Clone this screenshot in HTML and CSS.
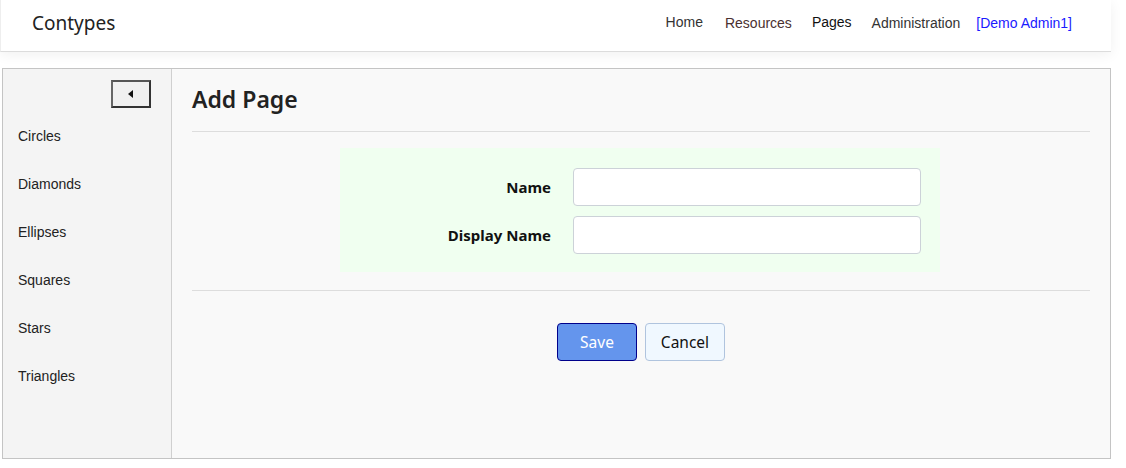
FILE: index.html
```html
<!DOCTYPE html>
<html>
<head>
<meta charset="utf-8">
<link rel="stylesheet" href="styles.css">
</head>
<body>
<div class="page">
  <header class="navbar">
    <a class="brand">Contypes</a>
    <nav class="nav">
      <a class="nav-home">Home</a>
      <a class="nav-res">Resources</a>
      <a class="nav-pages">Pages</a>
      <a class="nav-admin">Administration</a>
      <a class="nav-user">[Demo Admin1]</a>
    </nav>
  </header>
  <main class="frame">
    <aside class="sidebar">
      <div class="toggle-row">
        <button class="toggle"><svg width="6" height="8" viewBox="0 0 6 8"><path d="M5 0 L0 4 L5 8 Z" fill="#111"/></svg></button>
      </div>
      <ul class="side-list">
        <li>Circles</li>
        <li>Diamonds</li>
        <li>Ellipses</li>
        <li>Squares</li>
        <li>Stars</li>
        <li>Triangles</li>
      </ul>
    </aside>
    <section class="content">
      <h1 class="title">Add Page</h1>
      <div class="rule"></div>
      <div class="form-wrap">
        <div class="form-box">
          <div class="form-row">
            <label class="lbl">Name</label>
            <input class="inp" type="text">
          </div>
          <div class="form-row">
            <label class="lbl">Display Name</label>
            <input class="inp" type="text">
          </div>
        </div>
      </div>
      <div class="rule rule2"></div>
      <div class="actions">
        <button class="btn btn-save">Save</button>
        <button class="btn btn-cancel">Cancel</button>
      </div>
    </section>
  </main>
</div>
</body>
</html>
```
FILE: styles.css
```css
html, body {
  margin: 0;
  padding: 0;
  background: #fff;
}
.page {
  width: 1111px;
}
.navbar {
  height: 51px;
  background: #fff;
  border-bottom: 1px solid #dcdcdc;
  border-left: 1px solid #eee;
  box-shadow: 0 3px 12px rgba(0,0,0,0.06);
  display: flex;
  align-items: center;
  justify-content: space-between;
  padding: 0 39px 0 31px;
  margin-bottom: 16px;
}
.brand {
  font-family: "Noto Sans", "Open Sans", sans-serif;
  font-size: 19px;
  color: #222;
  margin-top: -5px;
}
.nav {
  display: flex;
  gap: 22px;
  font-family: "Liberation Sans", Arial, sans-serif;
  font-size: 14px;
  margin-top: -6px;
}
.nav a { color: #333; }
.nav-home { color: #333; position: relative; top: -1px; }
.nav .nav-res { color: #4a3030; margin-right: -2px; }
.nav .nav-pages { color: #111; position: relative; top: -1px; }
.nav .nav-admin { color: #333; margin-left: -2px; }
.nav .nav-user { color: #1a1aff; margin-left: -6px; }

.frame {
  margin-left: 2px;
  height: 389px;
  border: 1px solid #c4c4c4;
  display: flex;
  background: #f9f9f9;
}
.sidebar {
  width: 168px;
  background: #f4f4f4;
  border-right: 1px solid #d0d0d0;
}
.toggle-row {
  display: flex;
  justify-content: flex-end;
  padding: 11px 20px 0 0;
}
.toggle {
  width: 40px;
  height: 28px;
  border: 2px solid #333;
  border-top-color: #555;
  border-left-color: #666;
  background: #f0f0f0;
  padding: 0;
  display: flex;
  align-items: center;
  justify-content: center;
}
.side-list {
  list-style: none;
  margin: 0;
  padding: 0 0 0 15px;
  font-family: "Liberation Sans", Arial, sans-serif;
  font-size: 14px;
  color: #222;
}
.side-list li {
  height: 48px;
  line-height: 48px;
}
.side-list li:first-child { margin-top: 4px; }
.content {
  flex: 1;
  padding: 0 20px;
}
.title {
  margin: 0;
  padding-top: 15px;
  height: 47px;
  font-family: "Noto Sans", "Open Sans", sans-serif;
  font-weight: 600;
  font-size: 23px;
  color: #222;
  line-height: 30px;
}
.rule {
  height: 1px;
  background: #ddd;
}
.form-wrap {
  display: flex;
  justify-content: center;
  padding: 16px 2px 18px 0;
}
.form-box {
  width: 600px;
  background: #f0fff0;
  padding: 20px 19px 18px 0;
  box-sizing: border-box;
  display: flex;
  flex-direction: column;
  gap: 10px;
}
.form-row {
  display: flex;
  align-items: center;
  gap: 22px;
}
.lbl {
  width: 211px;
  text-align: right;
  font-family: "Noto Sans", "Open Sans", sans-serif;
  font-weight: 700;
  font-size: 15px;
  color: #111;
}
.inp {
  width: 348px;
  height: 38px;
  box-sizing: border-box;
  border: 1px solid #ccd2d8;
  border-radius: 4px;
  background: #fff;
}
.actions {
  display: flex;
  justify-content: center;
  gap: 8px;
  padding-top: 32px;
}
.btn {
  width: 80px;
  height: 38px;
  border-radius: 4px;
  font-family: "Noto Sans", "Open Sans", sans-serif;
  font-size: 15.5px;
  padding: 0;
}
.btn-save {
  background: #6495ed;
  border: 1px solid #00008b;
  color: #fff;
}
.btn-cancel {
  background: #f0f8ff;
  border: 1px solid #b0c4de;
  color: #111;
}
```
